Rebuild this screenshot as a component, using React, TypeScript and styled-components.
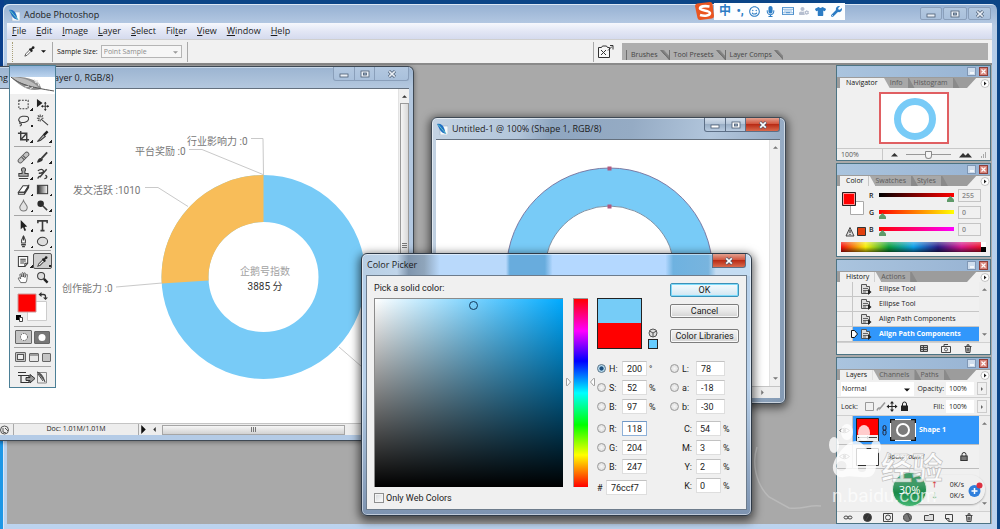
import React from 'react';
import styled, { createGlobalStyle, css } from 'styled-components';
import { FaMicrophone, FaRegKeyboard, FaTshirt, FaWrench, FaRegSmile, FaUserCog } from 'react-icons/fa';

const uiFont = '"Roboto", "Noto Sans CJK SC", sans-serif';
const titleFont = '"Open Sans", "Noto Sans CJK SC", sans-serif';

const GlobalStyle = createGlobalStyle`
  * { box-sizing: border-box; }
  body { margin: 0; overflow: hidden; font: 9px/12px ${uiFont}; color: #1c1c1c; }
  button, input, select { font: inherit; color: inherit; margin: 0; padding: 0; border: 0; background: none; border-radius: 0; }
  button { cursor: pointer; }
  svg { display: block; flex: none; }
  a { color: inherit; text-decoration: none; }
`;

/* ---------- Main application frame ---------- */

const Desktop = styled.div`
  position: relative;
  display: flex;
  min-height: 100vh;
  padding: 4px 3px 0;
  background: linear-gradient(#0a3f8c 60px, #0a3f8c 430px, #1d97e6 445px) 0 0 / 4px 100% no-repeat, #0b4587;
`;

const AppFrame = styled.main`
  flex: 1;
  display: flex;
  flex-direction: column;
  padding: 0 5px 5px 4px;
  border-radius: 6px 6px 0 0;
  background: linear-gradient(#95b0d2, #b7cbe4 22px, #b3cdea 60px, #bcd3ee);
  box-shadow: inset 1px 1px 0 #dbe7f5;
`;

const AppTitle = styled.header`
  display: flex;
  align-items: center;
  gap: 4px;
  height: 19px;
  padding: 3px 1px 0 2px;
  font: 9px/14px ${titleFont};
  h1 { margin: 0; font: inherit; flex: 1; }
`;

const MenuBar = styled.nav`
  display: flex;
  gap: 10px;
  height: 16px;
  padding-left: 5px;
  background: linear-gradient(#f6f8fd, #e3e7f5 50%, #d5dbee);
  font: 9px/16px ${titleFont};
`;

const OptionsBar = styled.div`
  display: flex;
  align-items: center;
  height: 26px;
  padding: 0 4px 0 5px;
  background: #f1f1f1;
  border-top: 1px solid #cfcfcf;
  border-bottom: 2px solid #8a8a8a;
  font: 7px/10px ${titleFont};
`;

const Grip = styled.div`
  width: 2px;
  height: 20px;
  margin-right: 9px;
  border-left: 1px dotted #a8a078;
`;

const Divider = styled.div`
  width: 1px;
  height: 20px;
  margin: 0 4px 0 ${p => (p.$push ? 'auto' : '5px')};
  background: #a9a9a9;
`;

const EyedropperButton = styled.button`
  display: flex;
  align-items: center;
  gap: 5px;
  width: 24px;
`;

const SampleLabel = styled.label`
  display: flex;
  align-items: center;
  gap: 3px;
  color: #111;
`;

const SampleSelect = styled.select`
  width: 81px;
  height: 13px;
  padding-left: 2px;
  border: 1px solid #b5b5b5;
  background: #f6f6f6;
  color: #8c8c8c;
  appearance: none;
`;

const SelectHolder = styled.span`
  position: relative;
  display: inline-flex;
  flex: ${p => (p.$grow ? 1 : 'none')};
  svg { position: absolute; right: 4px; top: 5px; }
  select { width: ${p => (p.$grow ? '100%' : undefined)}; }
`;

const PaletteWell = styled.div`
  display: flex;
  align-items: flex-end;
  width: 366px;
  height: 17px;
  margin-left: 8px;
  padding-left: 4px;
  background: #aeaeae;
`;

const WellTab = styled.button`
  position: relative;
  height: 10px;
  margin-right: 9px;
  padding: 0 2px 0 4px;
  border-left: 1px solid #6f6f6f;
  color: #444;
  line-height: 10px;
  &::after {
    content: '';
    position: absolute;
    right: -9px;
    top: 0;
    width: 9px;
    height: 10px;
    background: linear-gradient(48deg, #aeaeae 48%, #707070 52%, #8e8e8e 70%, #aeaeae 75%);
  }
`;

const Workspace = styled.section`
  position: relative;
  flex: 1;
  min-height: 459px;
  background: #a9a9a9;
`;

const SogouBar = styled.div`
  position: absolute;
  right: 155px;
  top: 2px;
  display: flex;
  align-items: center;
  height: 18px;
`;

const SogouTray = styled.div`
  display: flex;
  align-items: center;
  justify-content: space-between;
  width: 131px;
  height: 17px;
  padding: 0 3px 0 5px;
  background: #fdfeff;
  color: #2c7cc4;
  font: bold 12px/16px ${uiFont};
`;

/* ---------- Window chrome ---------- */

const ChromeGroup = styled.div`
  display: flex;
  align-self: flex-start;
  gap: ${p => (p.$apart ? '1px' : 0)};
`;

const ChromeButton = styled.button`
  display: flex;
  align-items: center;
  justify-content: center;
  width: ${p => p.$w}px;
  height: ${p => p.$h}px;
  border: 1px solid ${p => (p.$plain ? '#8a9fba' : '#5d6f86')};
  border-top-width: ${p => (p.$full ? 1 : 0)}px;
  margin-left: ${p => (p.$full ? 0 : -1)}px;
  border-radius: ${p => (p.$full ? '2px' : p.$end === 'l' ? '0 0 0 3px' : p.$end === 'r' ? '0 0 3px 0' : '0')};
  background: ${p =>
    p.$red
      ? 'linear-gradient(#e3a190, #d2563f 45%, #b92c16 50%, #d9694c)'
      : p.$plain
      ? 'linear-gradient(#b3c8e0, #a9c0db)'
      : 'linear-gradient(#d3dfec, #b4c5d8 45%, #99aec5 50%, #b8cbe0)'};
`;

const Glyph = ({ kind, light }: { kind: 'min' | 'max' | 'close'; light?: boolean }) => {
  const s = '#4b5c72';
  const f = light ? '#fff' : '#e9eff6';
  return (
    <svg width="10" height="8" viewBox="0 0 10 8">
      {kind === 'min' && <rect x="1" y="4" width="8" height="3" fill={f} stroke={s} strokeWidth=".8" />}
      {kind === 'max' && (
        <>
          <rect x="1" y="1" width="8" height="6" fill={f} stroke={s} strokeWidth=".8" />
          <rect x="3.5" y="3" width="3" height="2" fill="#9ab0ca" stroke={s} strokeWidth=".8" />
        </>
      )}
      {kind === 'close' && (
        <>
          <path d="M2 1.2 8 6.8M8 1.2 2 6.8" stroke={s} strokeWidth="3" />
          <path d="M2.2 1.4 7.8 6.6M7.8 1.4 2.2 6.6" stroke={f} strokeWidth="1.6" />
        </>
      )}
    </svg>
  );
};

const DocWindow = styled.article`
  position: absolute;
  left: ${p => p.$x}px;
  top: ${p => p.$y}px;
  width: ${p => p.$w}px;
  height: ${p => p.$h}px;
  display: flex;
  flex-direction: column;
  border: 1px solid #3f4954;
  ${p =>
    p.$active
      ? css`
          padding: 0 5px 5px 4px;
          border-radius: 6px;
          background: linear-gradient(100deg, #c4d3e3 0, #b3c6da 22%, #8fa6c0 30%, #95abc4 50%, #b2c6dc 70%, #8399b3);
          box-shadow: 0 2px 9px 2px rgba(0, 0, 0, 0.55), inset 0 0 0 1px rgba(255, 255, 255, 0.55);
        `
      : css`
          padding: 0 4px 5px 0;
          border-left: 0;
          border-radius: 0 6px 0 0;
          background: linear-gradient(#9bb4d1, #b3c7de 20px, #b4cbe6);
          box-shadow: 0 1px 5px rgba(0, 0, 0, 0.4), inset 0 1px 0 #c9d8e9;
        `}
`;

const DocTitle = styled.header`
  display: flex;
  align-items: center;
  height: 21px;
  flex: none;
  font: 9px/20px ${titleFont};
  h2 { margin: 0; flex: 1; font: inherit; white-space: nowrap; }
`;

const CutTitle = styled.span`
  display: flex;
  justify-content: flex-end;
  width: 8px;
  margin-right: 46px;
  overflow: hidden;
`;

const DocIcon = styled.span`
  padding: 0 4px 0 1px;
`;

const DocBody = styled.div`
  flex: 1;
  display: flex;
  min-height: 0;
  border-top: 1px solid #64707e;
  background: #fff;
`;

const Canvas = styled.div`
  flex: 1;
  overflow: hidden;
`;

const VScroll = styled.div`
  display: flex;
  flex-direction: column;
  align-items: center;
  justify-content: space-between;
  width: 11px;
  padding: ${p => (p.$thumb ? '5px 0 0' : '5px 0')};
  background: #f0f0f0;
  border-left: 1px solid #e2e2e2;
`;

const VThumb = styled.div`
  display: flex;
  align-items: center;
  justify-content: center;
  flex: 1;
  width: 9px;
  margin: 4px 0 36px;
  border: 1px solid #9a9a9a;
  background: linear-gradient(90deg, #f5f5f5, #d9d9d9);
`;

const StatusBar = styled.footer`
  display: flex;
  align-items: center;
  justify-content: ${p => (p.$end ? 'flex-end' : 'flex-start')};
  height: 12px;
  padding-right: ${p => (p.$end ? 15 : 0)}px;
  background: #ededed;
  border-top: 1px solid #c4c4c4;
  font: 7px/10px ${titleFont};
`;

const DocSize = styled.span`
  width: 126px;
  height: 11px;
  margin-left: 3px;
  border: solid #a9a9a9;
  border-width: 0 1px;
  text-align: center;
`;

const ScrollStart = styled.div`
  display: flex;
  margin: 0 5px 0 4px;
`;

const HThumb = styled.div`
  display: flex;
  align-items: center;
  justify-content: center;
  width: 183px;
  height: 10px;
  border: 1px solid #a5a5a5;
  background: linear-gradient(#f6f6f6, #d2d2d2);
`;

const Arrow = ({ dir, s = 5, c = '#333' }: { dir: 'up' | 'down' | 'left' | 'right'; s?: number; c?: string }) => {
  const d = { up: 'M0 4.5 3 1.5 6 4.5Z', down: 'M0 1.5 3 4.5 6 1.5Z', left: 'M4.5 0 1.5 3 4.5 6Z', right: 'M1.5 0 4.5 3 1.5 6Z' }[dir];
  return (
    <svg width={s} height={s} viewBox="0 0 6 6">
      <path d={d} fill={c} />
    </svg>
  );
};

const GripLines = ({ vertical }: { vertical?: boolean }) => (
  <svg width="7" height="7" viewBox="0 0 7 7">
    <path d={vertical ? 'M1 1.5h5M1 3.5h5M1 5.5h5' : 'M1.5 1v5M3.5 1v5M5.5 1v5'} stroke="#777" strokeWidth="1" />
  </svg>
);

const FeatherMark = () => (
  <svg width="11" height="12" viewBox="0 0 11 12">
    <path d="M3 3h8v9H3z" fill="#f7fafc" stroke="#9fb0c0" strokeWidth=".6" />
    <path d="M0 1c3-1 6 1 7 4 1 2 1 4 2 6-3-1-5-2-6-4C2 5 1 3 0 1z" fill="#2170c4" />
    <path d="M1 1.500c2 2 4 5 8 9" stroke="#6fd2c6" strokeWidth="1" fill="none" />
  </svg>
);

/* ---------- Score chart in the first document ---------- */

const ScoreChart = () => (
  <svg width="398" height="334" viewBox="0 89 398 334" fontFamily={uiFont} fontSize="10" fill="#777">
    <circle cx="263.500" cy="277" r="78.500" fill="none" stroke="#78cbf7" strokeWidth="47" />
    <path d="M263.500 175A102 102 0 0 0 161.700 283.500L208.600 280.500A55 55 0 0 1 263.500 222Z" fill="#f8bd59" />
    <g fill="none" stroke="#c9c9c9">
      <path d="M251 138.500h12l.5 36.500M189 149.500h13l61 25M145 187.500h13l30 19M116 287l46-4M339 347l30 26" />
    </g>
    <text x="187" y="145">行业影响力 :0</text>
    <text x="135" y="155">平台奖励 :0</text>
    <text x="73" y="194">发文活跃 :1010</text>
    <text x="62" y="292">创作能力 :0</text>
    <text x="265" y="275" textAnchor="middle" fill="#a2a2a2">企鹅号指数</text>
    <text x="265" y="290" textAnchor="middle" fill="#333">3885 分</text>
  </svg>
);

const ShapeCanvas = () => (
  <svg width="334" height="248" viewBox="436 140 334 248">
    <circle cx="609.500" cy="271" r="84" fill="none" stroke="#78cbf7" strokeWidth="38" />
    <circle cx="609.500" cy="271" r="103" fill="none" stroke="#756f9b" strokeWidth=".9" />
    <circle cx="609.500" cy="271" r="65" fill="none" stroke="#75879b" strokeWidth=".9" />
    <path d="M607.500 166.500h4v4h-4zM607.500 204.500h4v4h-4z" fill="#b0597f" />
  </svg>
);

/* ---------- Toolbox ---------- */

const Toolbox = styled.aside`
  position: absolute;
  left: 2px;
  top: 0;
  width: 47px;
  display: flex;
  flex-direction: column;
  border: 1px solid #4b7f96;
  background: #efefef;
  &::before {
    content: '';
    height: 11px;
    background: linear-gradient(#8eb0d6, #bcd4ee);
  }
`;

const ToolGroup = styled.div`
  display: grid;
  grid-template-columns: ${p => (p.$cols === 1 ? '1fr' : `repeat(${p.$cols || 2}, auto)`)};
  justify-content: center;
  align-content: center;
  justify-items: center;
  align-items: center;
  column-gap: ${p => p.$gap || 0}px;
  margin: 0 4px;
  padding: ${p => p.$pad}px 0;
  min-height: ${p => p.$h || 0}px;
  & + & { border-top: 1px solid #a6a6a6; }
`;

const ToolButton = styled.button`
  display: flex;
  align-items: center;
  justify-content: center;
  position: relative;
  width: 19px;
  height: 16px;
  border: ${p => (p.$on ? '1px solid #555' : '0')};
  border-radius: 2px;
  background: ${p => (p.$on ? '#cfcfcf' : 'none')};
  &::after {
    content: '';
    display: ${p => (p.$more ? 'block' : 'none')};
    position: absolute;
    right: 0;
    bottom: 1px;
    width: 3px;
    height: 3px;
    background: linear-gradient(135deg, transparent 50%, #222 50%);
  }
`;

const ToolIcon = ({ children }: { children: React.ReactNode }) => (
  <svg width="13" height="13" viewBox="0 0 14 14" fill="none" stroke="#3c3c3c" strokeWidth="1.1">
    {children}
  </svg>
);

const dropper = (
  <>
    <path d="M2 12 3 9.500 7.500 5 9 6.500 4.500 11z" fill="#fff" stroke="#555" />
    <path d="M7 4 10 7M8.200 5.500 11 2.500" stroke="#222" strokeWidth="2" />
    <circle cx="11" cy="2.800" r="1.400" fill="#222" stroke="none" />
  </>
);

const tools: Record<string, React.ReactNode> = {
  Marquee: <rect x="2" y="2.500" width="10" height="9" strokeDasharray="2 1.300" />,
  Move: (
    <>
      <path d="M1 1v9l6-4.500z" fill="#222" stroke="none" />
      <path d="M10 5v8M6 9h8" />
      <path d="M10 4l1.500 2h-3zM10 14l1.500-2h-3zM5.500 9l2-1.500v3zM14 9l-2-1.500v3z" fill="#222" stroke="none" />
    </>
  ),
  Lasso: <path d="M4 9C0 7 2 3 6 2.500s7 0 6.500 3S7.500 9.500 4 9c-1.500-.5-1.500 2 0 1.500s1 2-1 2.500" />,
  Wand: <path d="M5.500 5.500 13 12M4.500.5v3M1 4.500h3M2 1.500l1.500 1.500M7.500 1.500 6 3M2 7.500l1.500-1.500M4.500 6v2M6 4.500h2" />,
  Crop: <path d="M4 1v9.500h9M1 3.500h9.500V13M10.500 3.500 4 10.500" strokeWidth="1.500" />,
  Slice: (
    <>
      <path d="M1.500 12.500 8 5l2 2-5 4z" fill="#bbb" />
      <path d="M8.500 5.500 12.500 1.500" strokeWidth="2.600" stroke="#222" />
    </>
  ),
  Heal: (
    <>
      <path d="M3.500 10.500 10.500 3.500" stroke="#555" strokeWidth="5.500" strokeLinecap="round" />
      <path d="M3.500 10.500 10.500 3.500" stroke="#c2c2c2" strokeWidth="3.800" strokeLinecap="round" />
      <path d="M5 6.500 8 9.500M6.500 5 9.500 8" stroke="#555" />
    </>
  ),
  Brush: (
    <>
      <path d="M6 8 12 1.500" strokeWidth="2" />
      <path d="M1 12.500c1-4 3-6 5.500-4.500s-1 4-5.500 4.500z" fill="#333" stroke="none" />
    </>
  ),
  Stamp: <path d="M5.500 7V4.500a2.200 2.200 0 1 1 3 0V7H12v3H2V7zM2 12.500h10" fill="#aaa" />,
  HistoryBrush: <path d="M4 11 11.500 2.500M2 12.500c.5-2 2-3 3-2M2 4c3-2 5-2 6 0S5 7 3 6.500M9 12.500c3 0 3.500-3 1-3.500" strokeWidth="1.500" />,
  Eraser: (
    <>
      <path d="M1.500 10 6.500 3h6l-4.500 7z" fill="#fff" />
      <path d="M1.500 10v2H8l4.500-7V3L8 10v2M1.500 10H8" />
    </>
  ),
  Gradient: (
    <>
      <defs>
        <linearGradient id="toolGrad">
          <stop stopColor="#222" />
          <stop offset="1" stopColor="#fff" />
        </linearGradient>
      </defs>
      <rect x="1.500" y="2.500" width="11" height="9" fill="url(#toolGrad)" />
    </>
  ),
  Blur: <path d="M7 1.500c1 3 4 5 4 7.500s-2 4-4 4-4-1.500-4-4 3-4.500 4-7.500z" fill="#e2e2e2" stroke="#777" />,
  Dodge: (
    <>
      <circle cx="5" cy="5" r="3.500" fill="#2b2b2b" stroke="none" />
      <path d="M7.500 7.500 12 12" strokeWidth="1.600" />
    </>
  ),
  PathSelect: <path d="M4 1v10l2.500-2 1.500 4 1.800-.8L8.200 8.500 11 8z" fill="#222" stroke="none" />,
  Type: <path d="M2 4.500V2h10v2.500M7 2v10.500M4.800 12.500h4.400" strokeWidth="1.700" />,
  Pen: (
    <>
      <path d="M7 1C5 4 4.500 6 5 8.500h4C9.500 6 9 4 7 1z" fill="#fff" />
      <path d="M7 1v5M4.500 10.500h5M5.500 12.500h3" strokeWidth="1.500" />
    </>
  ),
  Ellipse: <ellipse cx="7" cy="7" rx="5.500" ry="4.500" fill="#ddd" />,
  Notes: (
    <>
      <path d="M1.500 1.500h10v7.500L8.500 12.500h-7z" fill="#fafafa" />
      <path d="M3.500 4.500h6M3.500 6.500h6M3.500 8.500h4M8.500 12.500V9h3" />
    </>
  ),
  Eyedropper: dropper,
  Hand: (
    <path
      d="M4 12.500C3 10.500 1 8.500 1.500 7.500s2 .5 2.500 1L3 4c0-1 1.200-1 1.500 0l.8 2.500V2.500c0-1 1.400-1 1.500 0v4l.8-4c.2-1 1.500-.7 1.400.3L8.500 7l1.500-3c.5-.8 1.600-.4 1.300.6C10.500 8 11 10 9.500 12.500z"
      fill="#fff"
      strokeWidth=".8"
    />
  ),
  Zoom: (
    <>
      <circle cx="5.500" cy="5.500" r="3.800" fill="#ddd" />
      <path d="M8.500 8.500 12.500 12.500" strokeWidth="2.600" stroke="#222" />
    </>
  )
};

const toolGroups = [
  { pad: 2, names: ['Marquee', 'Move', 'Lasso', 'Wand', 'Crop', 'Slice'] },
  { pad: 2, names: ['Heal', 'Brush', 'Stamp', 'HistoryBrush', 'Eraser', 'Gradient', 'Blur', 'Dodge'] },
  { pad: 1, names: ['PathSelect', 'Type', 'Pen', 'Ellipse'] },
  { pad: 2, names: ['Notes', 'Eyedropper', 'Hand', 'Zoom'] }
];
const noMore = ['Move', 'Wand', 'Hand', 'Zoom'];

const ModeButton = styled.button`
  display: flex;
  width: ${p => p.$w}px;
  height: ${p => p.$h}px;
  align-items: center;
  justify-content: center;
  border: 1px solid #666;
  border-radius: 1px;
  background: ${p => (p.$on ? '#c4c4c4' : '#e6e6e6')};
`;

const ToolboxPanel = () => (
  <Toolbox aria-label="Tools">
    <svg width="45" height="17" viewBox="0 0 45 17">
      <rect width="45" height="17" fill="#fff" />
      <path d="M1 0C9-1 20 1 26 4c5 3 4 6 6 8-8 2-14 1-20-3C7 6 4 3 1 0z" fill="#8e8e8e" />
      <path d="M1 0c8 0 18 2 25 8l3 3C18 9 8 5 1 0z" fill="#bcbcbc" />
      <path d="M1 0c8 7 18 10 43 14" stroke="#555" fill="none" />
      <path d="M24 2l2 4 1-3 2 6M15 10l4-1M20 12l3-2" stroke="#e8e8e8" fill="none" />
    </svg>
    {toolGroups.map((g, i) => (
      <ToolGroup key={i} $pad={g.pad}>
        {g.names.map(n => (
          <ToolButton key={n} aria-label={n} $on={n === 'Eyedropper'} $more={!noMore.includes(n)}>
            <ToolIcon>{tools[n]}</ToolIcon>
          </ToolButton>
        ))}
      </ToolGroup>
    ))}
    <ToolGroup $cols={1} $pad={0} $h={39}>
      <svg width="34" height="32" viewBox="0 0 34 32">
        <path d="M11.500 10.500h19v19h-19z" fill="#fff" stroke="#ccc" />
        <path d="M2 3h18v18H2z" fill="#fe0000" stroke="#c99" />
        <path d="M0 24h5v5H0z" fill="#000" />
        <path d="M3.500 26.500h3v4h-3z" fill="#fff" stroke="#444" />
        <path d="M24 3.500h3.500q2 0 2 2V7" fill="none" stroke="#333" strokeWidth="1.300" />
        <path d="M25.500 1v5L22.500 3.500zM27 6.500h5L29.500 9z" fill="#333" />
      </svg>
    </ToolGroup>
    <ToolGroup $pad={0} $h={21} $gap={2}>
      <ModeButton $w={17} $h={14} $on aria-label="Standard mode">
        <svg width="10" height="10"><circle cx="5" cy="5" r="3.500" fill="#fff" stroke="#555" strokeDasharray="1.500 1" /></svg>
      </ModeButton>
      <ModeButton $w={16} $h={13} $on aria-label="Quick mask mode">
        <svg width="14" height="11"><rect width="14" height="11" fill="#777" /><circle cx="7" cy="5.500" r="3.500" fill="#fff" /></svg>
      </ModeButton>
    </ToolGroup>
    <ToolGroup $cols={3} $pad={0} $h={19} $gap={3}>
      <ModeButton $w={11} $h={10} $on aria-label="Standard screen">
        <svg width="7" height="6"><rect x=".5" y=".5" width="6" height="5" fill="#eee" stroke="#555" /></svg>
      </ModeButton>
      <ModeButton $w={10} $h={9} aria-label="Full screen with menus">
        <svg width="8" height="7"><path d="M0 1h8" stroke="#555" /></svg>
      </ModeButton>
      <ModeButton $w={9} $h={9} $on aria-label="Full screen" />
    </ToolGroup>
    <ToolGroup $cols={1} $pad={0} $h={21}>
      <svg width="31" height="13" viewBox="0 0 31 13" fill="#eee" stroke="#333">
        <path d="M1 1.500h8M1 4.500h11v7H4v-7" strokeWidth="1.200" />
        <path d="M9 6.500h4v-3l5 4-5 4.500V9.500H9z" fill="#999" />
        <path d="M20.500 1.500h9v10.500h-9z" stroke="#888" />
        <path d="M20 1c4 1 6 4 8 10M21 3l5 7" fill="#555" stroke="#444" />
      </svg>
    </ToolGroup>
  </Toolbox>
);

/* ---------- Palette dock ---------- */

const Dock = styled.div`
  position: absolute;
  right: 1px;
  top: 0;
  width: 155px;
  display: flex;
  flex-direction: column;
  gap: 2px;
`;

const Panel = styled.section`
  height: ${p => p.$h}px;
  display: flex;
  flex-direction: column;
  border: 1px solid #4c7484;
  background: #f0f0f0;
  font: 7px/10px ${titleFont};
`;

const PanelTitle = styled.header`
  display: flex;
  justify-content: flex-end;
  align-items: center;
  gap: 3px;
  height: 11px;
  padding-right: 2px;
  background: linear-gradient(90deg, #aac4de, #97b3d3);
`;

const PanelButton = styled.button`
  display: flex;
  align-items: center;
  justify-content: center;
  width: 9px;
  height: 9px;
  border: 1px solid ${p => (p.$red ? '#8d3f3a' : '#7f97b5')};
  background: ${p => (p.$red ? '#d8847b' : '#cfdded')};
`;

const TabRow = styled.div`
  position: relative;
  display: flex;
  align-items: flex-end;
  height: 11px;
  padding: 0 14px 0 3px;
  background: #9c9c9c;
`;

const Tab = styled.button`
  position: relative;
  height: 10px;
  padding: 0 5px 0 6px;
  margin-right: ${p => (p.$on ? 1 : 0)}px;
  line-height: 10px;
  color: ${p => (p.$on ? '#111' : '#5a5a5a')};
  background: ${p => (p.$on ? '#f0f0f0' : '#a8a8a8')};
  &::after {
    content: '';
    position: absolute;
    z-index: 1;
    top: 0;
    right: -7px;
    width: 7px;
    height: 10px;
    background: ${p => (p.$on ? '#f0f0f0' : '#8a8a8a')};
    clip-path: polygon(0 0, 20% 0, 100% 100%, 0 100%);
  }
`;

const PanelMenu = styled.button`
  position: absolute;
  right: 0;
  bottom: 0;
  display: flex;
  justify-content: flex-end;
  width: 23px;
  height: 10px;
  background: #f0f0f0;
  clip-path: polygon(0 100%, 40% 0, 100% 0, 100% 100%);
`;

const Palette = ({ h, tabs, children }: { h: number; tabs: string[]; children: React.ReactNode }) => (
  <Panel $h={h}>
    <PanelTitle>
      <PanelButton aria-label="Minimize"><svg width="6" height="4"><path d="M1 3h4" stroke="#fff" strokeWidth="1.500" /></svg></PanelButton>
      <PanelButton $red aria-label="Close"><svg width="5" height="5"><path d="M.5.5l4 4M4.500.5l-4 4" stroke="#fff" strokeWidth="1.200" /></svg></PanelButton>
    </PanelTitle>
    <TabRow role="tablist">
      {tabs.map((t, i) => <Tab key={t} role="tab" $on={i === 0}>{t}</Tab>)}
      <PanelMenu aria-label="Panel menu">
        <svg width="10" height="10" viewBox="0 0 10 10"><circle cx="5" cy="5.500" r="4" fill="#fff" stroke="#aaa" strokeWidth=".7" /><path d="M4 3.500v4l2.500-2z" fill="#222" /></svg>
      </PanelMenu>
    </TabRow>
    {children}
  </Panel>
);

const NavPreview = styled.div`
  flex: 1;
  display: flex;
  align-items: center;
  justify-content: center;
`;

const NavThumb = styled.div`
  display: flex;
  justify-content: center;
  width: 70px;
  height: 52px;
  border: 2px solid #e05f62;
  background: #fff;
`;

const NavFooter = styled.footer`
  display: flex;
  align-items: center;
  gap: 8px;
  height: 12px;
  padding-right: 4px;
  border-top: 1px solid #c8c8c8;
`;

const ZoomInput = styled.input`
  width: 46px;
  height: 11px;
  padding-left: 4px !important;
  border-right: 1px solid #c8c8c8 !important;
  color: #555 !important;
`;

const NavSlider = styled.input`
  flex: 1;
  width: 20px;
  height: 11px;
  appearance: none;
  background: linear-gradient(#999, #999) 0 50% / 100% 1px no-repeat !important;
  &::-webkit-slider-thumb {
    appearance: none;
    width: 7px;
    height: 8px;
    border: 1px solid #888;
    border-radius: 1px 1px 4px 4px;
    background: #f6f6f6;
  }
`;

const ColorBody = styled.div`
  display: flex;
  gap: 3px;
  padding: 3px 9px 0 4px;
`;

const ChannelColumn = styled.div`
  flex: 1;
  display: flex;
  flex-direction: column;
  gap: 4px;
`;

const ChannelRow = styled.label`
  display: flex;
  align-items: center;
  gap: 4px;
  height: 13px;
  font-weight: 600;
  > span { width: 6px; }
`;

const ChannelSlider = styled.input`
  flex: 1;
  width: 20px;
  height: 13px;
  appearance: none;
  background: ${p => p.$g} 0 4px / 100% 4px no-repeat !important;
  &::-webkit-slider-thumb {
    appearance: none;
    width: 7px;
    height: 6px;
    margin-top: 7px;
    background: #5f9a69;
    clip-path: polygon(50% 0, 100% 60%, 100% 100%, 0 100%, 0 60%);
  }
`;

const ChannelValue = styled.input`
  width: 23px;
  height: 13px;
  padding-left: 3px !important;
  border: 1px solid #c4c4c4 !important;
  color: #888 !important;
`;

const Spectrum = styled.div`
  display: flex;
  flex-direction: column;
  align-items: flex-end;
  height: 10px;
  margin: 3px 4px 2px;
  background: linear-gradient(rgba(255,255,255,.35), transparent 50%, rgba(0,0,0,.55)),
    linear-gradient(90deg, #f20b0b, #f7ed05 17%, #0a9e3c 33%, #0b9fe8 50%, #2a1b86 67%, #d6178c 83%, #ee1010);
  &::before, &::after { content: ''; width: 5px; height: 5px; background: #fff; }
  &::after { background: #000; }
`;

const HistoryBody = styled.div`
  display: flex;
`;

const HistoryList = styled.ul`
  flex: 1;
  margin: 0;
  padding: 0;
  list-style: none;
`;

const HistoryItem = styled.li`
  display: flex;
  align-items: center;
  gap: 7px;
  height: 15px;
  border-bottom: 1px solid #c6c6c6;
  color: ${p => (p.$on ? '#fff' : '#222')};
  font-weight: ${p => (p.$on ? 700 : 400)};
  background: ${p => (p.$on ? '#3197fb' : 'transparent')};
`;

const SnapshotCell = styled.button`
  position: relative;
  width: 16px;
  height: 14px;
  border-right: 1px solid #c6c6c6 !important;
  background: #f0f0f0 !important;
  svg { position: absolute; right: -6px; top: 3px; }
`;

const PanelScroll = styled.div`
  display: flex;
  flex-direction: column;
  justify-content: space-between;
  align-items: center;
  width: 11px;
  padding: 5px 0;
  background: #ededed;
`;

const PanelFooter = styled.footer`
  display: flex;
  align-items: center;
  justify-content: ${p => (p.$spread ? 'space-between' : 'flex-end')};
  gap: ${p => (p.$spread ? 0 : 12)}px;
  flex: ${p => (p.$spread ? 'none' : 1)};
  height: 12px;
  padding: ${p => (p.$spread ? '0 16px 0 6px' : '0 17px 0 0')};
  border-top: 1px solid #d0d0d0;
`;

const FooterIcon = ({ d, fill = 'none' }: { d: string; fill?: string }) => (
  <svg width="10" height="9" viewBox="0 0 10 9"><path d={d} stroke="#444" fill={fill} /></svg>
);
const trash = 'M1.500 2.500h7M4 2V.8h2V2M2.500 3l.5 5.500h4l.5-5.500M4.200 4v3.500M5.800 4v3.500';
const newPage = 'M1.500 1.500h7v7H5L1.500 5.500zM1.500 5.500H5v3';

const StepIcon = () => (
  <svg width="12" height="12" viewBox="0 0 12 12">
    <path d="M1.500 1.500h5v2h3v7h-8z" fill="#ddd" stroke="#555" />
    <path d="M3 5.500h5M3 7.500h5M3 9h3" stroke="#666" />
    <path d="M8 6v6l3.500-3z" fill="#222" />
  </svg>
);

const LayerControls = styled.div`
  display: flex;
  align-items: center;
  gap: 3px;
  height: 18px;
  padding: 0 3px 0 4px;
  border-bottom: 1px solid #cfcfcf;
  label { margin-left: auto; display: flex; align-items: center; gap: 2px; }
`;

const BlendSelect = styled.select`
  height: 14px;
  padding-left: 1px;
  background: #fff;
  appearance: none;
`;

const PercentInput = styled.input`
  width: 28px;
  height: 13px;
  padding-left: 3px !important;
  background: #fff !important;
`;

const Spin = styled.button`
  display: flex;
  align-items: center;
  justify-content: center;
  width: 10px;
  height: 13px;
  border: 1px solid #ccc;
`;

const LayerArea = styled.div`
  flex: 1;
  display: flex;
`;

const LayerList = styled.ul`
  flex: 1;
  margin: 0;
  padding: 0;
  list-style: none;
`;

const LayerItem = styled.li`
  display: flex;
  align-items: center;
  gap: 3px;
  height: ${p => (p.$on ? 29 : 24)}px;
  padding-right: ${p => (p.$on ? 0 : 11)}px;
  border-bottom: 1px solid #bdbdbd;
  background: ${p => (p.$on ? '#3197fb' : 'transparent')};
  color: ${p => (p.$on ? '#fff' : '#222')};
  font-weight: ${p => (p.$on ? 700 : 400)};
  font-style: ${p => (p.$on ? 'normal' : 'italic')};
  > em { flex: 1; font-style: inherit; padding-left: ${p => (p.$on ? 0 : 5)}px; }
`;

const EyeCell = styled.button`
  display: flex;
  align-items: center;
  justify-content: center;
  align-self: stretch;
  width: 16px;
  background: #efefef;
  border-right: 1px solid #c6c6c6;
`;

const Eye = () => (
  <svg width="11" height="7" viewBox="0 0 11 7"><path d="M.5 3.500Q5.500-1 10.500 3.500 5.500 8 .5 3.500z" fill="#fff" stroke="#777" /><circle cx="5.500" cy="3.500" r="1.700" fill="#777" /></svg>
);
const Padlock = () => (
  <svg width="8" height="9" viewBox="0 0 8 9"><path d="M2 4V2.500a2 2 0 0 1 4 0V4" fill="none" stroke="#333" /><rect x=".8" y="4" width="6.400" height="4.500" fill="#777" stroke="#333" /></svg>
);

const Palettes = () => (
  <Dock>
    <Palette h={96} tabs={['Navigator', 'Info', 'Histogram']}>
      <NavPreview>
        <NavThumb>
          <svg width="66" height="48"><circle cx="34" cy="25" r="17.500" fill="none" stroke="#78cbf7" strokeWidth="7" /></svg>
        </NavThumb>
      </NavPreview>
      <NavFooter>
        <ZoomInput aria-label="Zoom" defaultValue="100%" />
        <svg width="7" height="5"><path d="M0 4.500 3.500 1 7 4.500z" fill="#333" /></svg>
        <NavSlider type="range" aria-label="Zoom slider" defaultValue={50} />
        <svg width="13" height="7"><path d="M0 6.500 4 2l2.500 2.500L9 2l4 4.500z" fill="#333" /></svg>
        <svg width="6" height="6"><path d="M5.500 0v6M3.500 2v4M1.500 4v2" stroke="#aaa" /></svg>
      </NavFooter>
    </Palette>
    <Palette h={94} tabs={['Color', 'Swatches', 'Styles']}>
      <ColorBody>
        <svg width="25" height="50" viewBox="0 0 25 50">
          <path d="M9.500 12.500h13v13h-13z" fill="#fff" stroke="#aaa" />
          <path d="M1.500 3.500h13v13h-13z" fill="#f00" stroke="#222" />
          <path d="M2.500 4.500h11v11h-11z" fill="none" stroke="#fff" strokeWidth=".6" />
          <path d="M9 38.500 13 47H5z" fill="#ddd" stroke="#444" /><path d="M9 41v3M9 45v1" stroke="#222" />
          <path d="M16.500 38.500h8v8h-8z" fill="#e2400f" stroke="#333" />
        </svg>
        <ChannelColumn>
          <ChannelRow><span>R</span><ChannelSlider type="range" min={0} max={255} defaultValue={255} $g="linear-gradient(90deg, #000, #f00)" /><ChannelValue aria-label="Red" defaultValue="255" /></ChannelRow>
          <ChannelRow><span>G</span><ChannelSlider type="range" min={0} max={255} defaultValue={0} $g="linear-gradient(90deg, #f00, #ff0)" /><ChannelValue aria-label="Green" defaultValue="0" /></ChannelRow>
          <ChannelRow><span>B</span><ChannelSlider type="range" min={0} max={255} defaultValue={0} $g="linear-gradient(90deg, #f00, #f0f)" /><ChannelValue aria-label="Blue" defaultValue="0" /></ChannelRow>
        </ChannelColumn>
      </ColorBody>
      <Spectrum />
    </Palette>
    <Palette h={96} tabs={['History', 'Actions']}>
      <HistoryBody>
        <HistoryList>
          {['Ellipse Tool', 'Ellipse Tool', 'Align Path Components', 'Align Path Components'].map((t, i) => (
            <HistoryItem key={i} $on={i === 3}>
              <SnapshotCell aria-label="Set history brush source">
                {i === 3 && <svg width="7" height="8" viewBox="0 0 7 8"><path d="M.5.5h3L6.500 4l-3 3.500h-3z" fill="#fff" stroke="#111" /></svg>}
              </SnapshotCell>
              <StepIcon />{t}
            </HistoryItem>
          ))}
        </HistoryList>
        <PanelScroll><Arrow dir="up" s={5} c="#777" /><Arrow dir="down" s={5} c="#777" /></PanelScroll>
      </HistoryBody>
      <PanelFooter>
        <FooterIcon d="M1.500 1.500h7v6h-7zM1.500 3.500h7M1.500 5.500h7M4.500 2v5" fill="#bbb" />
        <FooterIcon d="M.5 2.500h9v6h-9zM3 2V.5h4M5 4a1.500 1.500 0 1 0 .1 0" />
        <FooterIcon d={trash} fill="#ccc" />
      </PanelFooter>
    </Palette>
    <Palette h={167} tabs={['Layers', 'Channels', 'Paths']}>
      <LayerControls>
        <SelectHolder $grow>
          <BlendSelect aria-label="Blend mode"><option>Normal</option></BlendSelect>
          <Arrow dir="down" s={6} c="#111" />
        </SelectHolder>
        <label>Opacity:<PercentInput defaultValue="100%" /></label>
        <Spin aria-label="Opacity slider"><Arrow dir="right" s={4} c="#666" /></Spin>
      </LayerControls>
      <LayerControls>
        Lock:
        <svg width="50" height="11" viewBox="0 0 50 11" fill="none" stroke="#555">
          <path d="M4.500 1.500h8v8h-8z" stroke="#999" />
          <path d="M16 9.500c1-3 3-3 3-2l5-6" stroke="#999" strokeWidth="1.500" />
          <path d="M31 1v9M26.500 5.500h9" stroke="#222" />
          <path d="M31 0l2 2.500h-4zM31 11l2-2.500h-4zM25.500 5.500l2.500-2v4zM36.500 5.500l-2.500-2v4z" fill="#222" stroke="none" />
          <path d="M41.500 5V3a2 2 0 0 1 4 0v2" stroke="#222" /><path d="M40 4.500h7V10h-7z" fill="#222" stroke="none" />
        </svg>
        <label>Fill:<PercentInput defaultValue="100%" /></label>
        <Spin aria-label="Fill slider"><Arrow dir="right" s={4} c="#666" /></Spin>
      </LayerControls>
      <LayerArea>
        <LayerList>
          <LayerItem $on>
            <EyeCell aria-label="Toggle Shape 1"><Eye /></EyeCell>
            <svg width="23" height="24" viewBox="0 0 23 24"><path d="M.5.5h22v23H.5z" fill="#f00" stroke="#222" /><path d="M1 17h21v6H1z" fill="#eee" /><path d="M2 19.500h19M11.500 18v3" stroke="#444" /></svg>
            <svg width="5" height="11" viewBox="0 0 5 11" fill="none" stroke="#223"><rect x="1" y=".5" width="3" height="5" rx="1.500" /><rect x="1" y="5" width="3" height="5" rx="1.500" /></svg>
            <svg width="26" height="22" viewBox="0 0 26 22"><path d="M.5.5h25v21H.5z" fill="#7c7c7c" stroke="#fff" /><path d="M.5 4V.5H5M21 .5h4.500V4M.5 18v3.500H5M21 21.500h4.500V18" fill="none" stroke="#111" strokeWidth="1.500" /><circle cx="13" cy="11" r="6" fill="none" stroke="#fff" strokeWidth="2" /></svg>
            <em>Shape 1</em>
          </LayerItem>
          <LayerItem>
            <EyeCell aria-label="Toggle Background"><Eye /></EyeCell>
            <svg width="23" height="18" viewBox="0 0 23 18"><path d="M.5.5h22v17H.5z" fill="#fff" stroke="#333" /></svg>
            <em>Background</em>
            <Padlock />
          </LayerItem>
        </LayerList>
        <PanelScroll><Arrow dir="up" s={5} c="#777" /><Arrow dir="down" s={5} c="#777" /></PanelScroll>
      </LayerArea>
      <PanelFooter $spread>
        <FooterIcon d="M1 4.500a2 1.500 0 1 1 4 0 2 1.500 0 1 1-4 0M5 4.500a2 1.500 0 1 1 4 0 2 1.500 0 1 1-4 0" />
        <FooterIcon d="M8.500 4.500a4 4 0 1 1-8 0 4 4 0 0 1 8 0zM3 7l3-5" fill="#333" />
        <FooterIcon d="M.5.5h9v8h-9zM7.500 4.500a2.500 2.500 0 1 1-5 0 2.500 2.500 0 0 1 5 0z" />
        <FooterIcon d="M4.500.5a4 4 0 1 1-.1 0L7.500 7.500" fill="#777" />
        <FooterIcon d="M.5 2.500h4l1-1h4v6h-9z" fill="#ddd" />
        <FooterIcon d={newPage} />
        <FooterIcon d={trash} fill="#ccc" />
      </PanelFooter>
    </Palette>
  </Dock>
);

/* ---------- Color picker ---------- */

const Dialog = styled.form`
  position: absolute;
  left: 354px;
  top: 188px;
  width: 391px;
  height: 263px;
  display: flex;
  flex-direction: column;
  padding: 0 4px 5px;
  border: 1px solid #2f3a47;
  border-radius: 6px;
  background:
    linear-gradient(90deg, #b9cfe4, #bfd4e9 9%, #7f95ad 12%, #8fa5bb 16%, #b9d9fb 20%, #b9d9fb 37%, #68acdd 38%, #68acdd 47%, #b4d8ff 49%, #b4d8ff 78%, #6eb2e0 80%, #78b4de 89%, #c4dcf2 91%) 0 0 / 100% 22px no-repeat,
    linear-gradient(#b7d0ea 50%, #7d93b0);
  box-shadow: 0 3px 10px 2px rgba(0, 0, 0, 0.6), inset 0 0 0 1px rgba(255, 255, 255, 0.5);
`;

const DialogTitle = styled.header`
  display: flex;
  height: 21px;
  padding-right: 1px;
  font: 9px/21px ${titleFont};
  h2 { flex: 1; margin: 0; font: inherit; padding-left: 1px; }
`;

const DialogBody = styled.div`
  flex: 1;
  display: flex;
  padding: 5px 7px 4px 7px;
  border: 1px solid #6d7c8c;
  background: #f0f0f0;
`;

const FieldColumn = styled.div`
  display: flex;
  flex-direction: column;
  gap: 3px;
  width: 189px;
`;

const FieldCaption = styled.span`
  line-height: 14px;
`;

const ColorField = styled.div`
  position: relative;
  height: 189px;
  border: solid #8b8b8b;
  border-width: 1px 0 0 1px;
  background: linear-gradient(to top, #000, transparent), linear-gradient(to right, #fff, #00aaff);
`;

const FieldMarker = styled.div`
  position: absolute;
  left: 52%;
  top: 3%;
  width: 9px;
  height: 9px;
  margin: -4px;
  border: 1px solid #12395a;
  border-radius: 50%;
`;

const WebOnly = styled.label`
  display: flex;
  align-items: center;
  gap: 2px;
  margin-top: 2px;
  input {
    appearance: none;
    width: 10px;
    height: 10px;
    border: 1px solid #8e8f8f;
    background: linear-gradient(135deg, #d4d7da, #fff);
    box-shadow: inset 0 0 0 1px #f4f4f4;
  }
`;

const HueColumn = styled.label`
  display: flex;
  align-items: center;
  align-self: flex-start;
  gap: 2px;
  width: 34px;
  margin-top: 17px;
  padding-left: 3px;
  svg { margin-top: -22px; }
`;

const HueBar = styled.span`
  position: relative;
  width: 15px;
  height: 189px;
  border: solid #9a9a9a;
  border-width: 1px 0 0 1px;
  background: linear-gradient(#f00, #f0f 17%, #00f 33%, #0ff 50%, #0f0 67%, #ff0 83%, #f00);
  input {
    position: absolute;
    inset: 0;
    width: 100%;
    height: 100%;
    writing-mode: vertical-lr;
    opacity: 0;
  }
`;

const ValueColumn = styled.div`
  flex: 1;
  display: flex;
  flex-direction: column;
  gap: 12px;
`;

const TopRow = styled.div`
  display: flex;
  padding-top: 2px;
`;

const Compare = styled.div`
  width: 45px;
  height: 51px;
  margin-top: 15px;
  border: 1px solid #222;
  background: linear-gradient(#76ccf7 50%, #f00 50%);
`;

const WebSafe = styled.div`
  flex: 1;
  display: flex;
  flex-direction: column;
  gap: 1px;
  padding: 45px 0 0 6px;
`;

const SafeSwatch = styled.button`
  width: 10px;
  height: 10px;
  border: 1px solid #222;
  background: #66ccff;
`;

const ButtonColumn = styled.div`
  display: flex;
  flex-direction: column;
  width: 69px;
`;

const PushButton = styled.button`
  height: 14px;
  margin-bottom: ${p => p.$gap || 0}px;
  border: 1px solid ${p => (p.$primary ? '#3c91b8' : '#7d7d7d')};
  border-radius: 2px;
  background: ${p => (p.$primary ? 'linear-gradient(#f4fafd, #e4f1f8 50%, #cfe6f2)' : 'linear-gradient(#f2f2f2, #e8e8e8 50%, #d3d3d3)')};
  box-shadow: ${p => (p.$primary ? 'inset 0 0 0 1px #7fdcfb' : 'inset 0 0 0 1px #f8f8f8')};
  line-height: 11px;
  white-space: nowrap;
`;

const ValueGrid = styled.div`
  display: flex;
  justify-content: space-between;
`;

const ValueSide = styled.div`
  display: flex;
  flex-direction: column;
  gap: 4px;
  width: ${p => p.$w}px;
`;

const ValueRow = styled.div`
  display: flex;
  align-items: center;
  height: 15px;
  margin-top: ${p => (p.$space || 0)}px;
  label { width: ${p => p.$label || 13}px; text-align: ${p => (p.$right ? 'right' : 'left')}; }
`;

const Radio = styled.input`
  appearance: none;
  width: 9px;
  height: 9px;
  margin-right: 3px !important;
  border: 1px solid #9b9b9b !important;
  border-radius: 50% !important;
  background: radial-gradient(#f6f6f6, #d6d6d6) !important;
  &:checked { background: radial-gradient(#1b4e7d 35%, #b8dcf0 50%) !important; border-color: #5a7386 !important; }
`;

const ValueInput = styled.input`
  width: ${p => p.$w || 25}px;
  height: 15px;
  margin-left: ${p => p.$left || 0}px !important;
  padding-left: ${p => (p.$left ? 3 : 4)}px !important;
  border: 1px solid ${p => (p.$focus ? '#8fb1d8' : '#dedede')} !important;
  border-top-color: ${p => (p.$focus ? '#6f97c4' : '#c2c2c2')} !important;
  background: #fff !important;
`;

const Unit = styled.span`
  margin-left: 2px;
`;

const ColorPicker = () => {
  const left = [['H', '200', '°'], ['S', '52', '%'], ['B', '97', '%'], ['R', '118', ''], ['G', '204', ''], ['B', '247', '']];
  const lab = [['L', '78'], ['a', '-18'], ['b', '-30']];
  const cmyk = [['C', '54'], ['M', '3'], ['Y', '2'], ['K', '0']];
  return (
    <Dialog aria-label="Color Picker">
      <DialogTitle>
        <h2>Color Picker</h2>
        <ChromeButton type="button" $w={34} $h={14} $red $end="r" aria-label="Close"><Glyph kind="close" light /></ChromeButton>
      </DialogTitle>
      <DialogBody>
        <FieldColumn>
          <FieldCaption>Pick a solid color:</FieldCaption>
          <ColorField><FieldMarker /></ColorField>
          <WebOnly><input type="checkbox" />Only Web Colors</WebOnly>
        </FieldColumn>
        <HueColumn>
          <svg width="5" height="8"><path d="M.5.5h1l3 3.500-3 3.500h-1z" fill="#fff" stroke="#888" strokeWidth=".8" /></svg>
          <HueBar><input type="range" aria-label="Hue" min={0} max={360} defaultValue={200} /></HueBar>
          <svg width="5" height="8"><path d="M4.500.5h-1L.5 4l3 3.500h1z" fill="#fff" stroke="#888" strokeWidth=".8" /></svg>
        </HueColumn>
        <ValueColumn>
          <TopRow>
            <Compare />
            <WebSafe>
              <svg width="10" height="10" viewBox="0 0 10 10" fill="#ddd" stroke="#555"><circle cx="5" cy="5" r="4" /><path d="M1.500 3 5 5l3.500-2M5 5v4" /></svg>
              <SafeSwatch type="button" aria-label="Use web safe color" />
            </WebSafe>
            <ButtonColumn>
              <PushButton type="button" $primary $gap={7}>OK</PushButton>
              <PushButton type="button" $gap={11}>Cancel</PushButton>
              <PushButton type="button">Color Libraries</PushButton>
            </ButtonColumn>
          </TopRow>
          <ValueGrid>
            <ValueSide $w={66}>
              {left.map(([n, v, u], i) => (
                <ValueRow key={i} $space={i === 3 ? 3 : 0}>
                  <Radio type="radio" name="axis" aria-label={`Axis ${n}`} defaultChecked={i === 0} />
                  <label htmlFor={`v${i}`}>{n}:</label>
                  <ValueInput id={`v${i}`} defaultValue={v} $focus={i === 3} />
                  <Unit>{u}</Unit>
                </ValueRow>
              ))}
              <ValueRow $space={2} $label={9}>
                <label htmlFor="hex">#</label>
                <ValueInput id="hex" $w={41} defaultValue="76ccf7" />
              </ValueRow>
            </ValueSide>
            <ValueSide $w={69}>
              {lab.map(([n, v], i) => (
                <ValueRow key={n} $label={14}>
                  <Radio type="radio" name="axis" aria-label={`Axis ${n}`} />
                  <label htmlFor={`l${i}`}>{n}:</label>
                  <ValueInput id={`l${i}`} $w={29} defaultValue={v} />
                </ValueRow>
              ))}
              {cmyk.map(([n, v], i) => (
                <ValueRow key={n} $space={i === 0 ? 3 : 0} $label={22} $right>
                  <label htmlFor={`c${i}`}>{n}:</label>
                  <ValueInput id={`c${i}`} $w={25} $left={4} defaultValue={v} />
                  <Unit>%</Unit>
                </ValueRow>
              ))}
            </ValueSide>
          </ValueGrid>
        </ValueColumn>
      </DialogBody>
    </Dialog>
  );
};

/* ---------- Floating overlays ---------- */

const Watermark = styled.svg`
  position: absolute;
  right: 0;
  bottom: 0;
  pointer-events: none;
`;

const SpeedPill = styled.div`
  position: absolute;
  right: 15px;
  bottom: 25px;
  display: flex;
  align-items: center;
  gap: 4px;
  width: 91px;
  height: 29px;
  padding-right: 2px;
  border-radius: 15px;
  background: rgba(240, 240, 240, 0.93);
  box-shadow: 0 1px 2px rgba(0, 0, 0, 0.35);
  font: 7px/11px ${titleFont};
`;

const MemoryBall = styled.div`
  display: flex;
  align-items: center;
  justify-content: center;
  width: 35px;
  height: 35px;
  margin-left: -2px;
  flex: none;
  border-radius: 50%;
  border: 1px solid #d4e8db;
  background: linear-gradient(#3f9a66 35%, #188a4a 60%, #46b774);
  color: #fff;
  font: 11px/14px ${titleFont};
`;

const Rates = styled.div`
  flex: 1;
  display: flex;
  flex-direction: column;
`;

const Rate = styled.span`
  display: flex;
  justify-content: space-between;
  b { color: ${p => p.$c}; }
`;

const Overlays = () => (
  <>
    <SpeedPill>
      <MemoryBall>30%</MemoryBall>
      <Rates>
        <Rate $c="#d8433a"><b>↑</b>0K/s</Rate>
        <Rate $c="#4aa05c"><b>↓</b>0K/s</Rate>
      </Rates>
      <svg width="15" height="16" viewBox="0 0 15 16"><circle cx="6.500" cy="9" r="6" fill="#2f7fdc" /><path d="M6.500 6v6M3.500 9h6" stroke="#fff" strokeWidth="1.500" /><circle cx="11.500" cy="3.500" r="3" fill="#dc3040" /></svg>
    </SpeedPill>
    <Watermark width="250" height="110" viewBox="750 419 250 110" fill="#fff" fontFamily={uiFont}>
      <g fillOpacity=".8">
        <ellipse cx="847" cy="432" rx="6" ry="8" />
        <ellipse cx="864" cy="433" rx="6" ry="8" />
        <ellipse cx="834" cy="445" rx="5" ry="8" />
        <ellipse cx="876" cy="447" rx="5" ry="7" />
        <path fillRule="evenodd" d="M856 441c6 0 10 8 16 13s6 22-4 23-17-2-24 0-14-6-10-15 13-21 22-21zM841 461a5 5 0 1 0 1 10 5 5 0 0 0-1-10M858 461v8q0 3 4 3t4-3v-8z" />
      </g>
      <text x="881" y="479" fontSize="31" fontWeight="700" fillOpacity=".75" stroke="#b0b0b0" strokeOpacity=".8" strokeWidth=".7">经验</text>
      <text x="832" y="502" fontSize="19" fillOpacity=".7">n.baidu.com</text>
      <path d="M757 447c-5 15-2 36 12 50l20 11c14 2 20-4 32-2" fill="none" stroke="#fff" strokeOpacity=".2" strokeWidth="1.500" />
    </Watermark>
    <SogouBar>
      <svg width="19" height="18" viewBox="0 0 19 18">
        <path d="M0 4q0-2 2-2.500L15 0q2 0 2.500 2L19 14q0 2-2 2.500L5 18q-2 0-2.500-2z" fill="#ea5520" />
        <path d="M14.500 4.500C9 3.500 5 4.500 5 6.500s10 2 10 4.500-5 3.500-10 2" fill="none" stroke="#fff" strokeWidth="2.600" />
      </svg>
      <SogouTray>
        <span>中</span><span>•,</span>
        <FaRegSmile size={11} /><FaMicrophone size={11} /><FaRegKeyboard size={12} /><FaUserCog size={10} color="#b6bfd0" /><FaTshirt size={11} /><FaWrench size={11} />
      </SogouTray>
    </SogouBar>
  </>
);

const menus: [string, number][] = [['File', 0], ['Edit', 0], ['Image', 0], ['Layer', 0], ['Select', 0], ['Filter', 3], ['View', 0], ['Window', 0], ['Help', 0]];

export default function App() {
  return (
    <Desktop>
      <GlobalStyle />
      <AppFrame>
        <AppTitle>
          <FeatherMark />
          <h1>Adobe Photoshop</h1>
          <ChromeGroup $apart>
            <ChromeButton $w={22} $h={13} $full $plain aria-label="Minimize"><Glyph kind="min" /></ChromeButton>
            <ChromeButton $w={24} $h={13} $full $plain aria-label="Restore"><Glyph kind="max" /></ChromeButton>
            <ChromeButton $w={23} $h={13} $full $plain aria-label="Close"><Glyph kind="close" /></ChromeButton>
          </ChromeGroup>
        </AppTitle>
        <MenuBar>
          {menus.map(([m, k]) => (
            <a key={m} href="#menu">{m.slice(0, k)}<u>{m[k]}</u>{m.slice(k + 1)}</a>
          ))}
        </MenuBar>
        <OptionsBar>
          <Grip />
          <EyedropperButton aria-label="Eyedropper presets">
            <svg width="13" height="13" viewBox="0 0 14 14">{dropper}</svg>
            <Arrow dir="down" s={5} c="#111" />
          </EyedropperButton>
          <Divider />
          <SampleLabel>
            Sample Size:
            <SelectHolder>
              <SampleSelect><option>Point Sample</option></SampleSelect>
              <Arrow dir="down" s={5} c="#999" />
            </SelectHolder>
          </SampleLabel>
          <Divider />
          <Divider $push />
          <svg width="16" height="15" viewBox="0 0 16 15" fill="#f7f7f7" stroke="#333">
            <path d="M.5 3.500h3l1-1.500h4l1 1.500h2v10H.5z" />
            <path d="M3 6l5 5M8 6l-5 5M10 6.500l4-4M12 1.500h3v4" />
          </svg>
          <PaletteWell>
            <WellTab>Brushes</WellTab><WellTab>Tool Presets</WellTab><WellTab>Layer Comps</WellTab>
          </PaletteWell>
        </OptionsBar>
        <Workspace>
          <DocWindow $x={-7} $y={1} $w={414} $h={375}>
            <DocTitle>
              <CutTitle>ng</CutTitle>
              <h2>ayer 0, RGB/8)</h2>
              <ChromeGroup>
                <ChromeButton $w={22} $h={14} $plain $end="l" aria-label="Minimize"><Glyph kind="min" /></ChromeButton>
                <ChromeButton $w={21} $h={14} $plain aria-label="Maximize"><Glyph kind="max" /></ChromeButton>
                <ChromeButton $w={35} $h={14} $plain $end="r" aria-label="Close"><Glyph kind="close" /></ChromeButton>
              </ChromeGroup>
            </DocTitle>
            <DocBody>
              <Canvas><ScoreChart /></Canvas>
              <VScroll $thumb><Arrow dir="up" /><VThumb><GripLines vertical /></VThumb></VScroll>
            </DocBody>
            <StatusBar>
              <svg width="10" height="10" viewBox="0 0 10 10" fill="none" stroke="#555"><circle cx="4.500" cy="5" r="4" /><path d="M3 3v4l3 1M5 3l3 3" /></svg>
              <DocSize>Doc: 1.01M/1.01M</DocSize>
              <Arrow dir="right" s={9} c="#111" />
              <ScrollStart><Arrow dir="left" s={5} /></ScrollStart>
              <HThumb><GripLines /></HThumb>
            </StatusBar>
          </DocWindow>

          <DocWindow $active $x={424} $y={52} $w={355} $h={287}>
            <DocTitle>
              <DocIcon><FeatherMark /></DocIcon>
              <h2>Untitled-1 @ 100% (Shape 1, RGB/8)</h2>
              <ChromeGroup>
                <ChromeButton $w={22} $h={14} $end="l" aria-label="Minimize"><Glyph kind="min" light /></ChromeButton>
                <ChromeButton $w={21} $h={14} aria-label="Maximize"><Glyph kind="max" light /></ChromeButton>
                <ChromeButton $w={35} $h={14} $red $end="r" aria-label="Close"><Glyph kind="close" light /></ChromeButton>
              </ChromeGroup>
            </DocTitle>
            <DocBody>
              <Canvas><ShapeCanvas /></Canvas>
              <VScroll><Arrow dir="up" c="#777" /><Arrow dir="down" c="#777" /></VScroll>
            </DocBody>
            <StatusBar $end><Arrow dir="right" c="#777" /></StatusBar>
          </DocWindow>

          <ToolboxPanel />
          <Palettes />
          <ColorPicker />
        </Workspace>
      </AppFrame>
      <Overlays />
    </Desktop>
  );
}
